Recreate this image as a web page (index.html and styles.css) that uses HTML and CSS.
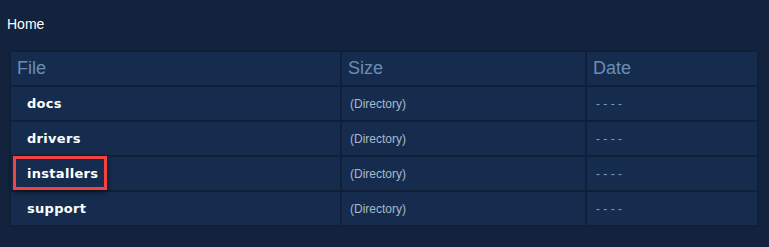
FILE: index.html
```html
<!DOCTYPE html>
<html lang="en">
<head>
<meta charset="utf-8">
<title>Home</title>
<link rel="stylesheet" href="styles.css">
</head>
<body>
<div class="crumb">Home</div>
<div class="listing">
  <div class="cell head">File</div>
  <div class="cell head">Size</div>
  <div class="cell head">Date</div>

  <div class="cell name">docs</div>
  <div class="cell size">(Directory)</div>
  <div class="cell date">- - - -</div>

  <div class="cell name">drivers</div>
  <div class="cell size">(Directory)</div>
  <div class="cell date">- - - -</div>

  <div class="cell name marked">installers<span class="highlight"></span></div>
  <div class="cell size">(Directory)</div>
  <div class="cell date">- - - -</div>

  <div class="cell name">support</div>
  <div class="cell size">(Directory)</div>
  <div class="cell date">- - - -</div>
</div>
</body>
</html>
```
FILE: styles.css
```css
html, body {
  margin: 0;
  padding: 0;
  background: #13233d;
  width: 769px;
  height: 247px;
  overflow: hidden;
}

.crumb {
  font-family: "Liberation Sans", Arial, sans-serif;
  font-size: 14px;
  color: #ffffff;
  padding: 16px 0 0 7px;
  height: 37px;
  box-sizing: border-box;
  line-height: 16px;
}

.listing {
  display: grid;
  grid-template-columns: 329px 243px 170px;
  grid-auto-rows: 33px;
  gap: 2px;
  padding: 2px;
  margin: 13px 0 0 9px;
  width: max-content;
  background: #102039;
}

.cell {
  background: #152c4e;
  display: flex;
  align-items: center;
  box-sizing: border-box;
  white-space: nowrap;
}

.head {
  font-family: "Liberation Sans", Arial, sans-serif;
  font-size: 18px;
  color: #6b8cb6;
  padding-left: 6px;
}

.name {
  font-family: "DejaVu Sans", Verdana, sans-serif;
  font-weight: bold;
  font-size: 13px;
  letter-spacing: 0.3px;
  color: #ffffff;
  padding-left: 16px;
}

.size {
  font-family: "Liberation Sans", Arial, sans-serif;
  font-size: 12px;
  color: #a9b8cc;
  padding-left: 8px;
}

.date {
  font-family: "Liberation Sans", Arial, sans-serif;
  font-size: 12px;
  color: #7b9cc6;
  padding-left: 9px;
}

.marked {
  position: relative;
}

.highlight {
  position: absolute;
  left: 2px;
  top: -1px;
  width: 94px;
  height: 34px;
  box-sizing: border-box;
  border: 3px solid #f24242;
  box-shadow: 0 2px 6px rgba(0, 0, 0, 0.45);
}
```
